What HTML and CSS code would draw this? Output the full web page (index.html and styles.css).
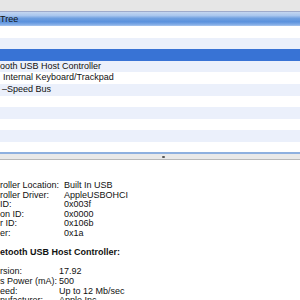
FILE: index.html
```html
<!DOCTYPE html>
<html lang="en">
<head>
    <meta charset="UTF-8">
    <meta name="viewport" content="width=device-width, initial-scale=1.0">
    <title>System Profiler - USB Device Tree</title>
    <link rel="stylesheet" href="styles.css">
</head>
<body>
    <div class="window">
        <div class="toolbar"></div>

        <div class="col-header">Tree</div>
        <ul class="tree">
            <li></li>
            <li></li>
            <li class="selected"></li>
            <li>ooth USB Host Controller</li>
            <li class="indent">Internal Keyboard/Trackpad</li>
            <li class="indent-sm">&ndash;Speed Bus</li>
            <li></li>
            <li></li>
            <li></li>
            <li></li>
            <li></li>
        </ul>

        <div class="splitter"><span class="grip"></span></div>

        <div class="details">
            <div class="props first">
                <span>roller Location:</span><span>Built In USB</span>
                <span>roller Driver:</span><span>AppleUSBOHCI</span>
                <span>ID:</span><span>0x003f</span>
                <span>on ID:</span><span>0x0000</span>
                <span>r ID:</span><span>0x106b</span>
                <span>er:</span><span>0x1a</span>
            </div>
            <h3>etooth USB Host Controller:</h3>
            <div class="props second">
                <span>rsion:</span><span>17.92</span>
                <span>s Power (mA):</span><span>500</span>
                <span>eed:</span><span>Up to 12 Mb/sec</span>
                <span>nufacturer:</span><span>Apple Inc.</span>
            </div>
        </div>
    </div>
</body>
</html>
```

FILE: styles.css
```css
body {
    margin: 0;
    font-family: "Liberation Sans", Arial, sans-serif;
    font-size: 9px;
    color: #111;
    background: white;
}
.window {
    width: 300px;
    height: 300px;
    overflow: hidden;
}
.toolbar {
    height: 11px;
    background: #e6e6e6;
}
.col-header {
    height: 15px;
    line-height: 15px;
    box-sizing: border-box;
    border-top: 1px solid #9eaacb;
    background: linear-gradient(#c4d6f0 0%, #a9c6ee 25%, #6f9fe0 45%, #5b92dd 70%, #7eaae6 88%, #a8c5ee 100%);
}
.tree {
    list-style: none;
    margin: 0;
    padding: 0;
    height: 126px;
    overflow: hidden;
}
.tree li {
    height: 11.6px;
    line-height: 11.6px;
    white-space: nowrap;
}
.tree li:nth-child(even) {
    background: #ebf0fb;
}
.tree li.selected {
    background: #3873d5;
    color: white;
}
.tree li.indent {
    padding-left: 3px;
}
.tree li.indent-sm {
    padding-left: 2px;
}
.splitter {
    height: 8px;
    box-sizing: border-box;
    border-top: 2px solid #8eb0df;
    border-bottom: 1px solid #b9b9b9;
    background: #e9e9e9;
    position: relative;
}
.grip {
    position: absolute;
    left: 162px;
    top: 2px;
    width: 3px;
    height: 2px;
    background: #555;
    border-radius: 1px;
}
.details {
    padding-top: 21px;
    line-height: 9.6px;
}
.props {
    display: grid;
    grid-template-columns: 64px auto;
}
.props.second {
    grid-template-columns: 59px auto;
}
.details h3 {
    margin: 9.6px 0;
    font-size: 9px;
    line-height: 9.6px;
    font-weight: bold;
}
```
